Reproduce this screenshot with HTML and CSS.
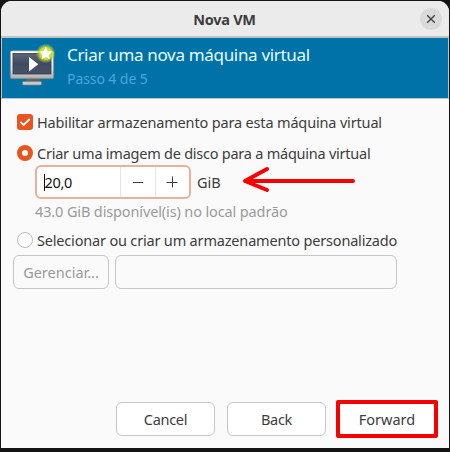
FILE: index.html
```html
<!DOCTYPE html>
<html lang="pt-BR">
<head>
<meta charset="utf-8">
<title>Nova VM</title>
<link rel="stylesheet" href="styles.css">
</head>
<body>
<main class="window">
  <header class="titlebar">
    <h1 class="title">Nova VM</h1>
    <button class="close" aria-label="Fechar"><svg width="10" height="10" viewBox="0 0 10 10"><path d="M1.2 1.2 8.8 8.8M8.8 1.2 1.2 8.8" stroke="#3d3d3d" stroke-width="1.3"/></svg></button>
  </header>
  <section class="banner">
    <svg class="monitor" width="48" height="46" viewBox="0 0 48 46">
      <defs>
        <linearGradient id="frame" x1="0" y1="0" x2="0" y2="1"><stop offset="0" stop-color="#fff"/><stop offset=".7" stop-color="#dedede"/><stop offset="1" stop-color="#aaa"/></linearGradient>
        <linearGradient id="screen" x1="0" y1="0" x2="0" y2="1"><stop offset="0" stop-color="#5b6679"/><stop offset=".5" stop-color="#414b60"/><stop offset="1" stop-color="#465168"/></linearGradient>
        <radialGradient id="glow"><stop offset="0" stop-color="#f4f36b"/><stop offset=".6" stop-color="#c3d92c"/><stop offset="1" stop-color="#8fc43a" stop-opacity="0"/></radialGradient>
      </defs>
      <path d="M19 34h12l2 4H17z" fill="#59616a"/>
      <rect x="14.5" y="37.5" width="19" height="3.5" rx="1" fill="#c9c9c9" stroke="#77817f" stroke-width=".6"/>
      <rect x="2.3" y="6.8" width="43.4" height="27.9" rx="1.5" fill="url(#frame)" stroke="#77817f" stroke-width=".7"/>
      <rect x="5" y="9.5" width="38" height="20.5" fill="url(#screen)" stroke="#303746" stroke-width=".8"/>
      <path d="M21 13v14.5l9.3-7.2z" fill="#fff"/>
      <circle cx="37.7" cy="9.3" r="10" fill="url(#glow)"/>
      <path d="M37.7 2.8l2 4.2 4.6.5-3.4 3.2.9 4.6-4.1-2.3-4.1 2.3.9-4.6-3.4-3.2 4.6-.5z" fill="#fff"/>
    </svg>
    <div class="heading">
      <h2 class="headline">Criar uma nova máquina virtual</h2>
      <p class="step">Passo 4 de 5</p>
    </div>
  </section>
  <section class="form">
    <div class="option enable">
      <span class="check"><svg width="16" height="16" viewBox="0 0 16 16"><path d="M3.3 7.8 6.6 11 12.7 5" fill="none" stroke="#fff" stroke-width="1.8"/></svg></span>
      <span class="label enable-label">Habilitar armazenamento para esta máquina virtual</span>
    </div>
    <div class="option create">
      <span class="radio selected"></span>
      <span class="label create-label">Criar uma imagem de disco para a máquina virtual</span>
    </div>
    <div class="size">
      <div class="spin">
        <div class="value"><span class="caret"></span><span class="number">20,0</span></div>
        <div class="adjust"><svg width="12" height="12" viewBox="0 0 12 12"><path d="M1 6.5h10" stroke="#3d3d3d"/></svg></div>
        <div class="adjust"><svg width="12" height="12" viewBox="0 0 12 12"><path d="M.5 6.5h11M6.5 .5v11" stroke="#3d3d3d"/></svg></div>
      </div>
      <span class="unit">GiB</span>
      <svg class="arrow" width="114" height="30" viewBox="0 0 114 30"><path d="M111 15H3M25 3 3 15l22 9" fill="none" stroke="#f90000" stroke-width="4" stroke-linecap="round" stroke-linejoin="round"/></svg>
    </div>
    <p class="hint"><span>43.0 GiB disponível(is) no local padrão</span></p>
    <div class="option custom">
      <span class="radio"></span>
      <span class="label custom-label">Selecionar ou criar um armazenamento personalizado</span>
    </div>
    <div class="storage">
      <button class="manage"><span>Gerenciar...</span></button>
      <div class="path"></div>
    </div>
  </section>
  <footer class="actions">
    <button class="action"><span class="cancel">Cancel</span></button>
    <button class="action"><span class="back">Back</span></button>
    <button class="action highlighted"><span class="forward">Forward</span></button>
  </footer>
</main>
</body>
</html>
```
FILE: styles.css
```css
* { box-sizing: border-box; }
body {
  margin: 0;
  width: 450px;
  height: 452px;
  padding: 1px 1px 4px;
  overflow: hidden;
  background: #151315;
  color: #3d3d3d;
  font: 14.5px/20px "Noto Sans", sans-serif;
}
h1, h2, p { margin: 0; font-weight: 400; }
button { font: inherit; color: inherit; padding: 0; }
svg { display: block; flex: none; }
span { white-space: nowrap; }
.window {
  display: flex;
  flex-direction: column;
  width: 448px;
  height: 447px;
  background: #fafafa;
  border-radius: 11px 11px 0 0;
  overflow: hidden;
}
.titlebar {
  display: grid;
  grid-template-columns: 1fr auto 1fr;
  align-items: center;
  height: 36px;
  padding-right: 7px;
  background: #ebebeb;
  border-bottom: 1px solid #c2c2c2;
}
.title { grid-column: 2; margin-left: 6px; font-size: 14.5px; font-weight: 700; line-height: 20px; letter-spacing: -.3px; }
.close {
  display: grid;
  place-items: center;
  justify-self: end;
  width: 22px;
  height: 22px;
  border: 0;
  border-radius: 50%;
  background: #dadada;
}
.banner {
  display: flex;
  height: 62px;
  border: 1px solid #b9c7cd;
  background: #0072a8;
}
.monitor { margin: 6px 0 0 6px; }
.heading { padding: 5px 0 0 11px; }
.headline { color: #e5ffff; font-size: 17px; line-height: 24px; letter-spacing: -.32px; }
.step { color: #4aa7dc; font-size: 14px; line-height: 20px; margin-top: 2px; letter-spacing: -.08px; }
.form { padding: 13px 0 0 12px; }
.option { display: flex; align-items: center; gap: 4px; height: 20px; padding-left: 4px; }
.create { margin-top: 11px; }
.check { width: 16px; height: 16px; border-radius: 3px; background: #e95420; }
.radio { width: 16px; height: 16px; border: 1px solid #bcbcbc; border-radius: 50%; background: #fff; }
.selected { border: 5.5px solid #e95420; }
.enable-label { letter-spacing: -.16px; }
.create-label { letter-spacing: -.24px; }
.custom-label { letter-spacing: -.18px; }
.size { display: flex; align-items: center; height: 34px; margin: 2px 0 0 22px; }
.spin { display: flex; width: 156px; height: 34px; border: 2px solid #ebb09c; border-radius: 6px; background: #fff; }
.value { display: flex; flex: none; align-items: center; width: 83px; padding-left: 7px; color: #111; }
.number { margin-left: -.5px; letter-spacing: -.3px; }
.caret { width: 1px; height: 17px; background: #111; }
.adjust { display: grid; flex: 1; place-items: center; border-left: 1px solid #e5e5e5; }
.unit { width: 45px; margin-left: 6px; }
.arrow { margin-top: -2px; }
.hint { margin: 2px 0 0 22px; color: #9b9b9b; letter-spacing: -.13px; }
.custom { margin-top: 9px; }
.storage { display: flex; gap: 6px; margin-top: 5px; }
.manage { width: 96px; height: 34px; border: 1px solid #c6c6c6; border-radius: 6px; background: #fafafa; color: #9b9b9b; }
.path { width: 282px; height: 34px; border: 1px solid #c6c6c6; border-radius: 6px; background: #fafafa; }
.actions { display: flex; align-items: center; gap: 12px; height: 38px; margin: auto 0 10px 115px; }
.action { width: 99px; height: 34px; border: 1px solid #c6c6c6; border-radius: 6px; background: #fff; }
.cancel, .back { letter-spacing: -.3px; }
.highlighted { width: 102px; height: 38px; margin-left: -2px; border: 4px solid #f90000; border-radius: 2px; }
```
